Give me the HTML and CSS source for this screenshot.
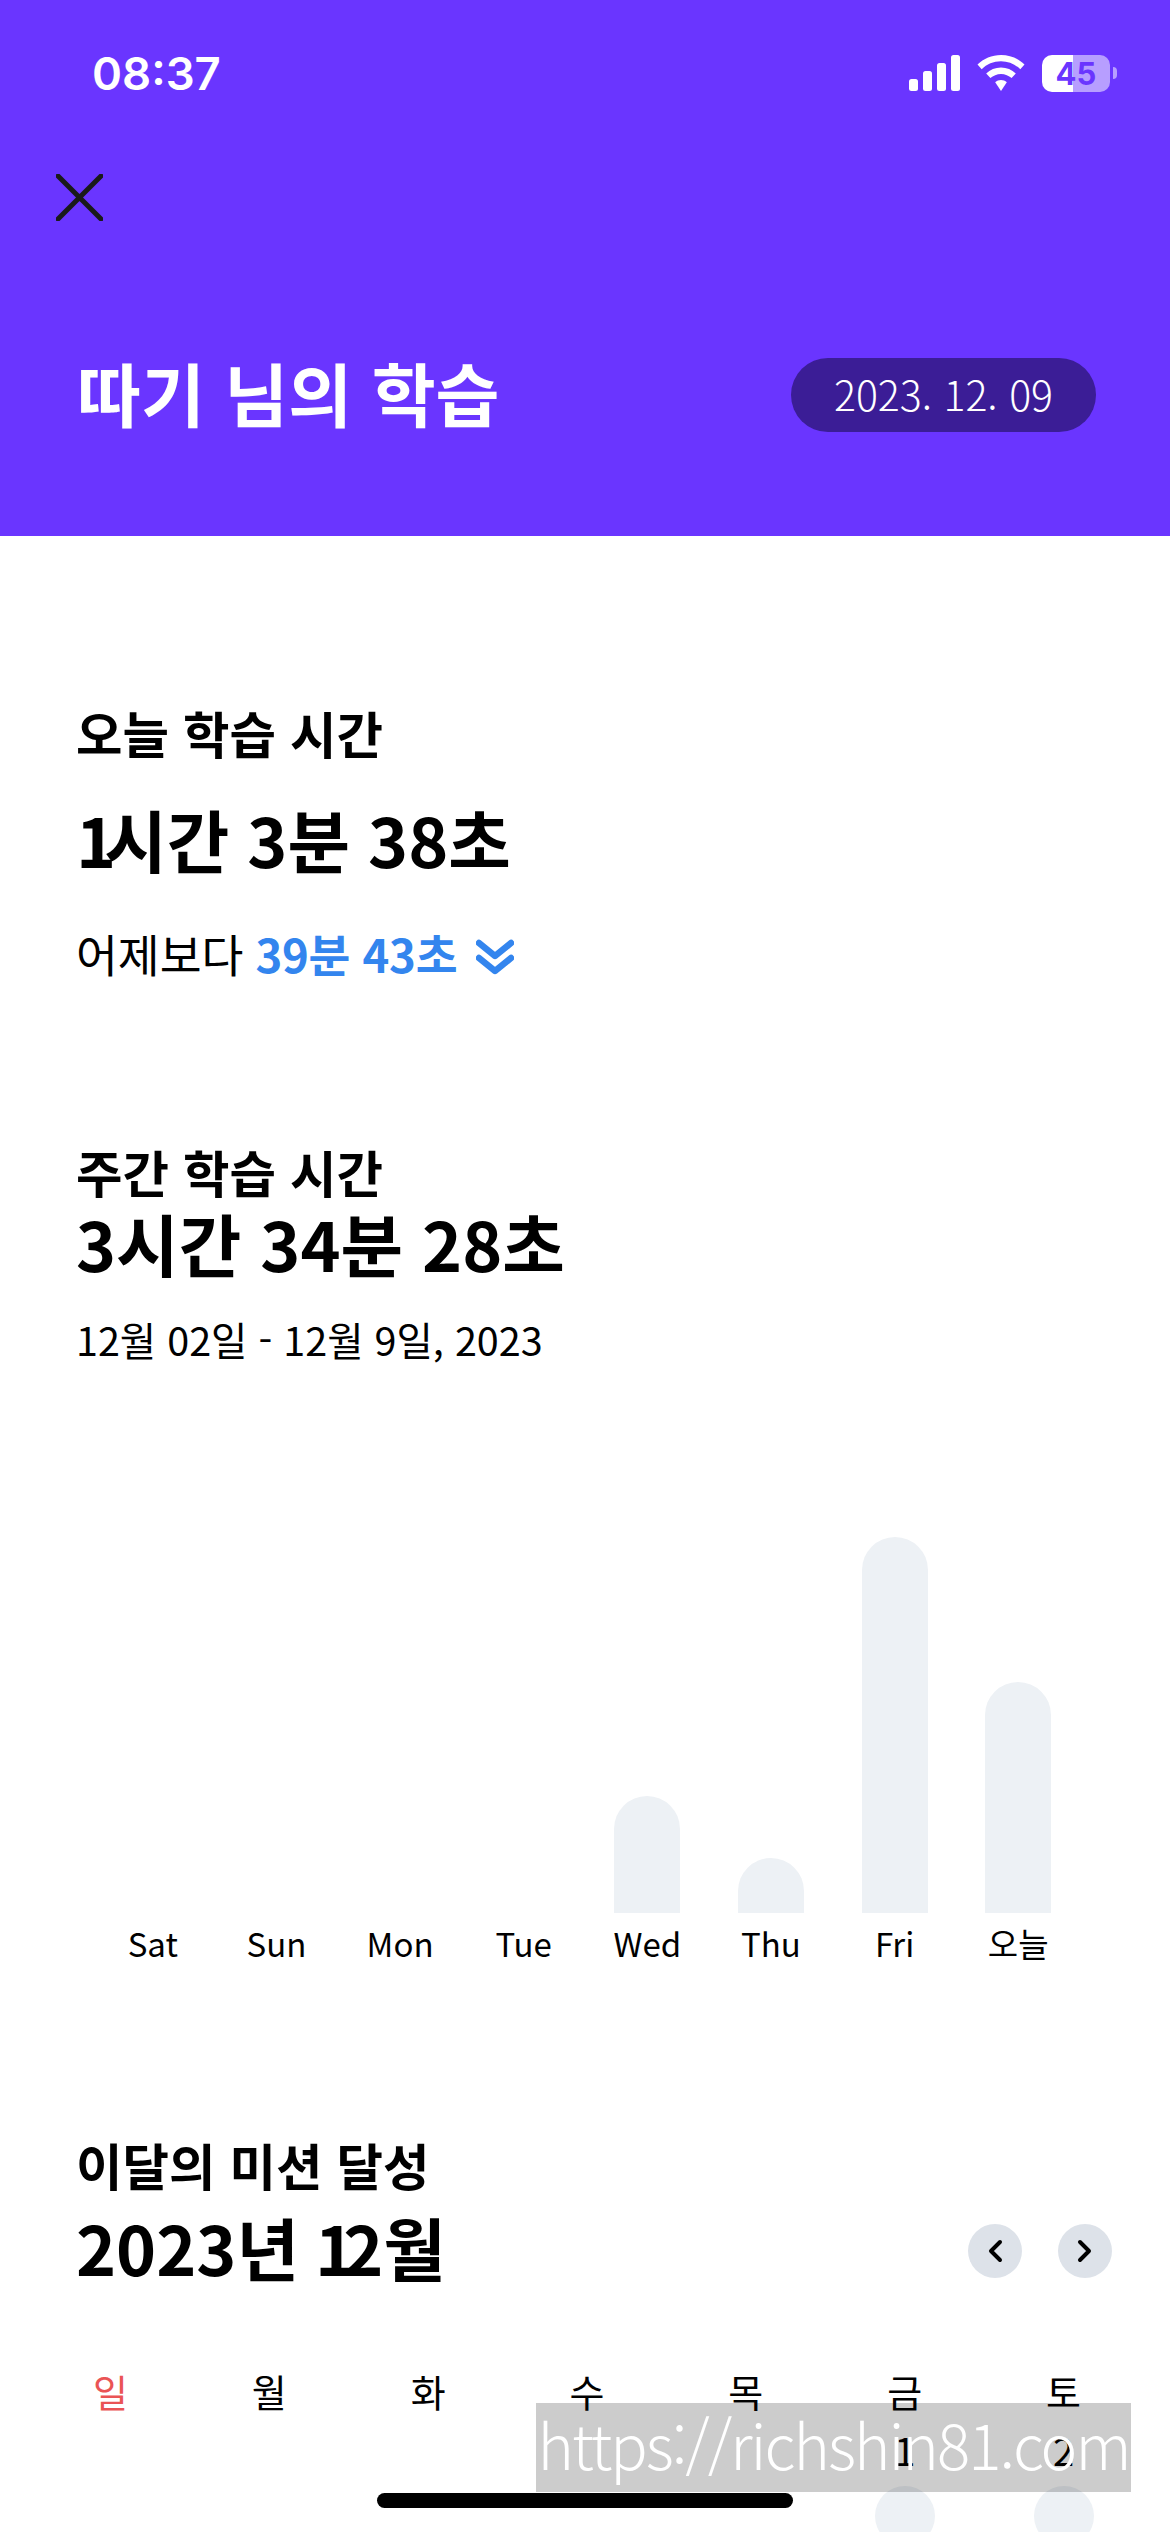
FILE: index.html
```html
<!DOCTYPE html>
<html lang="ko">
<head>
    <meta charset="UTF-8">
    <title>학습 통계</title>
    <link rel="stylesheet" href="styles.css">
</head>
<body>
    <div class="screen">
        <header class="top">
            <div class="status">
                <span class="clock">08:37</span>
                <div class="status-icons">
                    <svg class="signal" width="51" height="36" viewBox="0 0 51 36">
                        <rect x="0" y="24" width="9" height="12" rx="2.5"/>
                        <rect x="14" y="16" width="9" height="20" rx="2.5"/>
                        <rect x="28" y="8" width="9" height="28" rx="2.5"/>
                        <rect x="42" y="0" width="9" height="36" rx="2.5"/>
                    </svg>
                    <svg class="wifi" width="48" height="36" viewBox="0 0 48 36">
                        <path d="M24 0C14.800 0 6.600 3.600 0.500 9.500L4.700 14.200C9.700 9.300 16.500 6.300 24 6.300S38.300 9.300 43.300 14.200L47.500 9.500C41.400 3.600 33.200 0 24 0Z"/>
                        <path d="M24 12.500C18.300 12.500 13.100 14.700 9.200 18.400L13.400 23.100C16.200 20.500 19.900 18.900 24 18.900S31.800 20.500 34.600 23.100L38.800 18.400C34.900 14.700 29.700 12.500 24 12.500Z"/>
                        <path d="M24 25C21.900 25 19.800 25.800 18.200 27.200L24 36L29.800 27.200C28.200 25.800 26.100 25 24 25Z"/>
                    </svg>
                    <div class="battery">45</div>
                    <div class="battery-cap"></div>
                </div>
            </div>
            <div class="close-row">
                <svg width="47" height="47" viewBox="0 0 47 47">
                    <path d="M2 2L45 45M45 2L2 45" stroke="#1a1a1a" stroke-width="5" stroke-linecap="round" fill="none"/>
                </svg>
            </div>
            <div class="title-row">
                <h1 class="title">따기 님의 학습</h1>
                <span class="date-pill">2023. 12. 09</span>
            </div>
        </header>

        <section class="today">
            <h2 class="label">오늘 학습 시간</h2>
            <div class="big today-big"><span class="one">1</span>시간 3분 38초</div>
            <div class="compare">
                어제보다 <b class="diff">39분 43초</b>
                <svg class="down" width="38" height="38" viewBox="0 0 38 38">
                    <path d="M3 5L19 18L35 5M3 20L19 33L35 20" stroke="#3385ee" stroke-width="6.500" stroke-linecap="round" stroke-linejoin="round" fill="none"/>
                </svg>
            </div>
        </section>

        <section class="week">
            <h2 class="label">주간 학습 시간</h2>
            <div class="big week-big">3시간 34분 28초</div>
            <div class="range">12월 02일 - 12월 9일, 2023</div>
        </section>

        <div class="chart">
            <div class="col"><div class="bar" style="height:0"></div><span class="day">Sat</span></div>
            <div class="col"><div class="bar" style="height:0"></div><span class="day">Sun</span></div>
            <div class="col"><div class="bar" style="height:0"></div><span class="day">Mon</span></div>
            <div class="col"><div class="bar" style="height:0"></div><span class="day">Tue</span></div>
            <div class="col"><div class="bar" style="height:117px"></div><span class="day">Wed</span></div>
            <div class="col"><div class="bar" style="height:55px"></div><span class="day">Thu</span></div>
            <div class="col"><div class="bar" style="height:376px"></div><span class="day">Fri</span></div>
            <div class="col"><div class="bar" style="height:231px"></div><span class="day">오늘</span></div>
        </div>

        <section class="month">
            <h2 class="label">이달의 미션 달성</h2>
            <div class="month-row">
                <div class="big month-big">2023년 <span class="one">1</span>2월</div>
                <div class="month-nav">
                    <button class="nav-btn">
                        <svg width="16" height="24" viewBox="0 0 16 24"><path d="M13 3L4 12L13 21" stroke="#000" stroke-width="4" stroke-linecap="round" stroke-linejoin="round" fill="none"/></svg>
                    </button>
                    <button class="nav-btn">
                        <svg width="16" height="24" viewBox="0 0 16 24"><path d="M3 3L12 12L3 21" stroke="#000" stroke-width="4" stroke-linecap="round" stroke-linejoin="round" fill="none"/></svg>
                    </button>
                </div>
            </div>
        </section>

        <div class="calendar">
            <div class="cal-head sunday">일</div>
            <div class="cal-head">월</div>
            <div class="cal-head">화</div>
            <div class="cal-head">수</div>
            <div class="cal-head">목</div>
            <div class="cal-head">금</div>
            <div class="cal-head">토</div>
            <div class="cal-day empty"></div>
            <div class="cal-day empty"></div>
            <div class="cal-day empty"></div>
            <div class="cal-day empty"></div>
            <div class="cal-day empty"></div>
            <div class="cal-day"><span>1</span><i class="dot"></i></div>
            <div class="cal-day"><span>2</span><i class="dot"></i></div>
        </div>

        <div class="watermark">https://richshin81.com</div>
        <div class="home-bar"></div>
    </div>
</body>
</html>
```

FILE: styles.css
```css
* {
    box-sizing: border-box;
}
html, body {
    margin: 0;
    height: 2532px;
    overflow: hidden;
    background-color: white;
}
body {
    font-family: "Noto Sans CJK KR", "Noto Sans", sans-serif;
    color: black;
}
.screen {
    position: relative;
    width: 1170px;
    height: 2532px;
    overflow: hidden;
}

/* header */
.top {
    height: 536px;
    background-color: #6a35ff;
    color: white;
}
.status {
    height: 92px;
    padding: 48px 0 0 92px;
    display: flex;
    justify-content: space-between;
}
.clock {
    font-family: Inter, sans-serif;
    font-weight: 600;
    font-size: 45.500px;
    line-height: 52px;
}
.status-icons {
    display: flex;
    align-items: flex-start;
    padding: 7px 53px 0 0;
}
.signal, .wifi {
    fill: white;
    display: block;
}
.signal {
    margin-right: 17px;
}
.wifi {
    margin-right: 17px;
}
.battery {
    width: 68px;
    height: 37px;
    border-radius: 10px;
    background: linear-gradient(to right, white 46%, #b79eff 46%);
    color: #6a35ff;
    font-family: Inter, sans-serif;
    font-weight: 700;
    font-size: 31px;
    line-height: 37px;
    text-align: center;
}
.battery-cap {
    width: 4px;
    height: 12px;
    margin: 12px 0 0 3px;
    border-radius: 0 6px 6px 0;
    background-color: #b79eff;
}
.close-row {
    padding: 82px 0 0 56px;
    height: 129px;
}
.close-row svg {
    display: block;
}
.title-row {
    margin-top: 137px;
    height: 74px;
    padding: 0 74px 0 77px;
    display: flex;
    justify-content: space-between;
    align-items: center;
}
.title {
    margin: 0;
    font-size: 69.500px;
    font-weight: 700;
    line-height: 68px;
    padding-bottom: 6px;
}
.date-pill {
    width: 305px;
    height: 74px;
    border-radius: 37px;
    background-color: #3b1d96;
    font-size: 41px;
    font-weight: 300;
    line-height: 70px;
    text-align: center;
}

/* text blocks */
.label {
    margin: 0;
    font-size: 50.500px;
    font-weight: 700;
    line-height: 58px;
    padding-bottom: 2px;
}
.big {
    font-size: 68px;
    font-weight: 700;
    line-height: 80px;
}
.one {
    letter-spacing: -12px;
}
.today, .week, .month {
    padding: 0 58px 0 76px;
}
.today {
    padding-top: 167px;
}
.today-big {
    margin-top: 36px;
    word-spacing: -1px;
}
.compare {
    margin-top: 44px;
    font-size: 45.500px;
    line-height: 60px;
    display: flex;
    align-items: center;
    gap: 12px;
}
.diff {
    color: #3385ee;
    font-weight: 700;
    letter-spacing: -0.300px;
}
.down {
    margin: 8px 0 0 7px;
}
.week {
    padding-top: 159px;
}
.week-big {
    margin-top: 1px;
}
.range {
    margin-top: 26px;
    font-size: 39.500px;
    line-height: 60px;
}

/* chart */
.chart {
    margin-top: 131px;
    padding: 0 90px 0 91px;
    display: grid;
    grid-template-columns: repeat(8, 1fr);
    height: 464px;
    align-items: end;
}
.col {
    display: flex;
    flex-direction: column;
    align-items: center;
}
.bar {
    width: 66px;
    border-radius: 33px 33px 0 0;
    background-color: #edf1f5;
}
.day {
    margin-top: 10px;
    font-size: 33px;
    line-height: 41px;
}

/* month */
.month {
    padding-top: 171px;
}
.month-row {
    margin-top: 16px;
    display: flex;
    justify-content: space-between;
    align-items: center;
}
.month-big {
    line-height: 72px;
    padding-bottom: 8px;
    word-spacing: -3px;
}
.month-nav {
    display: flex;
    gap: 36px;
}
.nav-btn {
    width: 54px;
    height: 54px;
    padding: 0;
    border: none;
    border-radius: 50%;
    background-color: #dde2e9;
    display: flex;
    align-items: center;
    justify-content: center;
}
.calendar {
    margin-top: 75px;
    padding: 0 27px 0 31px;
    display: grid;
    grid-template-columns: repeat(7, 1fr);
    row-gap: 9px;
    text-align: center;
    font-size: 38px;
    line-height: 50px;
}
.sunday {
    color: #ea5455;
}
.cal-day {
    display: flex;
    flex-direction: column;
    align-items: center;
    gap: 11px;
}
.dot {
    width: 60px;
    height: 60px;
    border-radius: 50%;
    background-color: #edf1f5;
}

/* overlays */
.watermark {
    position: absolute;
    left: 536px;
    top: 2403px;
    width: 595px;
    height: 89px;
    background-color: rgba(0, 0, 0, 0.2);
    color: white;
    font-size: 62px;
    font-weight: 300;
    letter-spacing: -2px;
    line-height: 80px;
    text-align: center;
    white-space: nowrap;
}
.home-bar {
    position: absolute;
    left: 377px;
    top: 2493px;
    width: 416px;
    height: 15px;
    border-radius: 8px;
    background-color: black;
}
```
